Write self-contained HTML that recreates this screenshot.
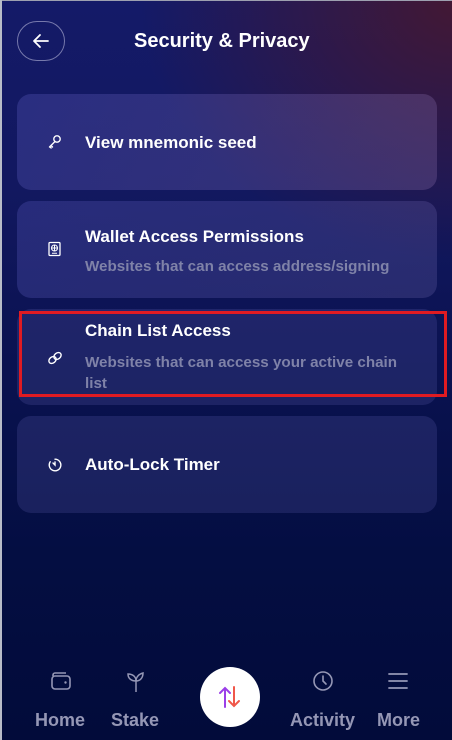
<!DOCTYPE html>
<html><head><style>
*{margin:0;padding:0;box-sizing:border-box}
body{width:452px;height:740px;overflow:hidden;font-family:"Liberation Sans",sans-serif;position:relative;
background:#030c3c;}
.bg{position:absolute;inset:0;background:
radial-gradient(ellipse 320px 260px at 460px 0px,rgba(70,24,48,0.95),rgba(70,24,48,0) 100%),
linear-gradient(180deg,#141a68 0%,#121860 25%,#0a1250 50%,#040e42 75%,#020b3a 100%);}
.edge{position:absolute;left:0;top:0;bottom:0;width:2px;background:#b8bcc8}
.edget{position:absolute;left:0;top:0;right:0;height:1px;background:#9da0b0}
.back{position:absolute;left:17px;top:21px;width:48px;height:40px;border:1px solid rgba(200,200,230,0.55);border-radius:20px}
.title{position:absolute;left:0;right:0;top:30px;color:#fff;font-weight:bold;font-size:20px}
.title span{position:absolute;left:134px}
.card{position:absolute;left:17px;width:420px;border-radius:14px;background:rgba(100,100,180,0.22)}
.ic{position:absolute;left:47px}
.t{position:absolute;left:85px;color:#fff;font-weight:bold;font-size:17px}
.s{position:absolute;left:85px;color:#7f82a8;font-weight:bold;font-size:15.2px;line-height:21px;width:330px}
.red{position:absolute;left:19px;top:311px;width:428px;height:86px;border:3px solid #e01b22}
.nav{position:absolute;top:0;color:#9597b5;font-weight:bold;font-size:18px;text-align:center}
</style></head><body>
<div class="bg"></div>
<div class="edget"></div><div class="edge"></div>
<div class="back"><svg width="48" height="40" viewBox="0 0 48 40" style="position:absolute;left:-1px;top:-1px"><path d="M31 20H17M23 14l-6 6 6 6" stroke="#fff" stroke-width="1.8" fill="none" stroke-linecap="round" stroke-linejoin="round"/></svg></div>
<div class="title"><span>Security &amp; Privacy</span></div>

<div class="card" style="top:94px;height:96px;background:linear-gradient(110deg,rgba(90,90,190,0.32),rgba(140,110,170,0.3))"></div>
<svg class="ic" style="top:134px" width="16" height="16" viewBox="0 0 16 16"><circle cx="10" cy="5" r="3.2" stroke="#fff" stroke-width="1.4" fill="none"/><path d="M8 7.5L2.5 13M4 11.5l1.5 1.5M2.8 12.7l1.3 1.3" stroke="#fff" stroke-width="1.4" fill="none" stroke-linecap="round"/></svg>
<div class="t" style="top:133px">View mnemonic seed</div>

<div class="card" style="top:201px;height:97px;background:linear-gradient(110deg,rgba(90,90,190,0.3),rgba(120,110,180,0.25))"></div>
<svg class="ic" style="top:241px" width="16" height="16" viewBox="0 0 16 16"><rect x="2" y="1.5" width="11" height="13" rx="1" stroke="#fff" stroke-width="1.3" fill="none"/><circle cx="7.5" cy="7" r="3" stroke="#fff" stroke-width="1.1" fill="none"/><path d="M7.5 4v6M4.5 7h6M5 12.2h5" stroke="#fff" stroke-width="1" fill="none"/></svg>
<div class="t" style="top:227px">Wallet Access Permissions</div>
<div class="s" style="top:256px">Websites that can access address/signing</div>

<div class="card" style="top:309px;height:96px"></div>
<svg class="ic" style="top:350px" width="16" height="16" viewBox="0 0 16 16"><g stroke="#fff" stroke-width="1.4" fill="none"><ellipse cx="5.5" cy="10" rx="4" ry="3" transform="rotate(-40 5.5 10)"/><ellipse cx="10.5" cy="6" rx="4" ry="3" transform="rotate(-40 10.5 6)"/></g></svg>
<div class="t" style="top:321px">Chain List Access</div>
<div class="s" style="top:352px;width:320px">Websites that can access your active chain list</div>
<div class="red"></div>

<div class="card" style="top:416px;height:97px"></div>
<svg class="ic" style="top:457px" width="16" height="16" viewBox="0 0 16 16"><path d="M8 2.2A5.8 5.8 0 1 1 3.2 4.8" stroke="#fff" stroke-width="1.4" fill="none" stroke-linecap="round"/><path d="M8 5v3l-2-2" stroke="#fff" stroke-width="1.4" fill="none" stroke-linecap="round"/></svg>
<div class="t" style="top:455px">Auto-Lock Timer</div>

<svg style="position:absolute;left:50px;top:671px" width="22" height="20" viewBox="0 0 22 20"><path d="M3 5V4a2 2 0 0 1 2-2h11" stroke="#9597b5" stroke-width="1.6" fill="none"/><rect x="2" y="5" width="18" height="13" rx="3" stroke="#9597b5" stroke-width="1.6" fill="none"/><circle cx="15.5" cy="11.5" r="1.2" fill="#9597b5"/></svg>
<svg style="position:absolute;left:125px;top:670px" width="22" height="24" viewBox="0 0 22 24"><path d="M11 22V11M11 11C11 6 7 4 3 4c0 5 4 7 8 7zM11 11c0-4 3-7 7-8 0 5-3 8-7 8" stroke="#9597b5" stroke-width="1.5" fill="none"/></svg>
<div style="position:absolute;left:200px;top:667px;width:60px;height:60px;border-radius:30px;background:#fff"></div>
<svg style="position:absolute;left:217px;top:685px" width="26" height="24" viewBox="0 0 26 24"><path d="M8 22V3M3 8l5-5 5 5" stroke="#9b3fe8" stroke-width="2" fill="none" stroke-linecap="round"/><path d="M17 2v19M12 16l5 5 5-5" stroke="#f0574a" stroke-width="2" fill="none" stroke-linecap="round"/></svg>
<svg style="position:absolute;left:312px;top:670px" width="22" height="22" viewBox="0 0 22 22"><circle cx="11" cy="11" r="9" stroke="#9597b5" stroke-width="1.6" fill="none"/><path d="M11 6v5l3 3" stroke="#9597b5" stroke-width="1.6" fill="none" stroke-linecap="round"/></svg>
<svg style="position:absolute;left:387px;top:672px" width="22" height="18" viewBox="0 0 22 18"><path d="M2 2h18M2 9h18M2 16h18" stroke="#9597b5" stroke-width="1.8" stroke-linecap="round"/></svg>
<div class="nav" style="left:35px;top:710px">Home</div>
<div class="nav" style="left:111px;top:710px">Stake</div>
<div class="nav" style="left:290px;top:710px">Activity</div>
<div class="nav" style="left:377px;top:710px">More</div>
</body></html>
